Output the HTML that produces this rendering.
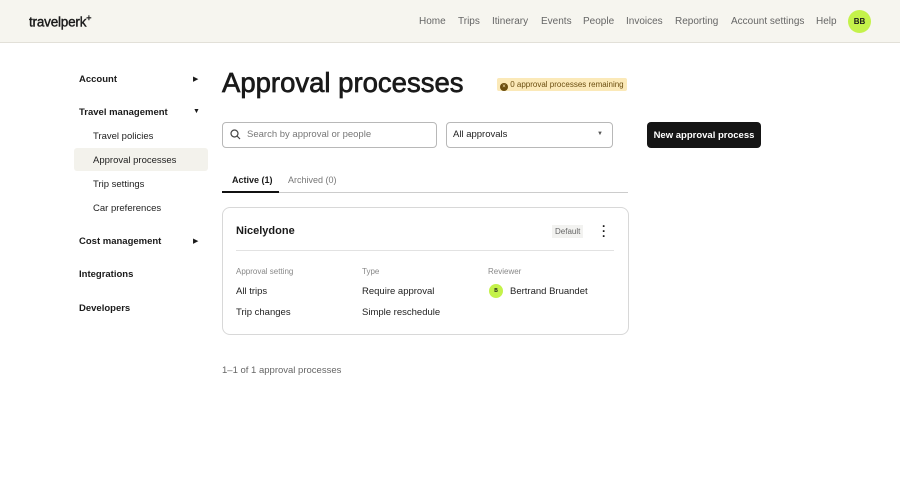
<!DOCTYPE html>
<html><head><style>
*{box-sizing:border-box;margin:0;padding:0}
body{width:900px;height:484px;background:#fff;font-family:"Liberation Sans",sans-serif;color:#1a1a1a;position:relative;overflow:hidden}
.a{position:absolute;white-space:nowrap}
.hdr{position:absolute;left:0;top:0;width:900px;height:43px;background:#f6f5ef;border-bottom:1px solid #e2e0d8}
.nav{font-size:10px;color:#666;top:16px}
.side{font-size:9.5px;font-weight:bold;color:#1a1a1a}
.sub{font-size:9.5px;color:#222}
.tri{font-size:7px}
.lbl{font-size:8px;color:#888}
.val{font-size:9.5px;color:#222}
</style></head><body>
<div class="hdr"></div>
<div class="a" style="left:29px;top:13px;font-size:13.5px;letter-spacing:-0.2px;-webkit-text-stroke:0.4px #1a1a1a">travelperk<sup style="font-size:9px">+</sup></div>
<div class="a nav" style="left:419px">Home</div>
<div class="a nav" style="left:458px">Trips</div>
<div class="a nav" style="left:492px">Itinerary</div>
<div class="a nav" style="left:541px">Events</div>
<div class="a nav" style="left:583px">People</div>
<div class="a nav" style="left:626px">Invoices</div>
<div class="a nav" style="left:675px">Reporting</div>
<div class="a nav" style="left:731px">Account settings</div>
<div class="a nav" style="left:816px">Help</div>
<div class="a" style="left:848px;top:10px;width:23px;height:23px;border-radius:50%;background:#c4f24a;font-size:8px;font-weight:bold;text-align:center;line-height:23px">BB</div>

<div class="a side" style="left:79px;top:74px">Account</div><div class="a tri" style="left:193px;top:75px">▶</div>
<div class="a side" style="left:79px;top:107px">Travel management</div><div class="a tri" style="left:193px;top:108px">▼</div>
<div class="a sub" style="left:93px;top:131px">Travel policies</div>
<div class="a" style="left:74px;top:148px;width:134px;height:23px;background:#f3f2ec;border-radius:3px"></div>
<div class="a sub" style="left:93px;top:155px">Approval processes</div>
<div class="a sub" style="left:93px;top:179px">Trip settings</div>
<div class="a sub" style="left:93px;top:203px">Car preferences</div>
<div class="a side" style="left:79px;top:236px">Cost management</div><div class="a tri" style="left:193px;top:237px">▶</div>
<div class="a side" style="left:79px;top:269px">Integrations</div>
<div class="a side" style="left:79px;top:303px">Developers</div>

<div class="a" style="left:222px;top:67px;font-size:27.5px;-webkit-text-stroke:0.7px #1a1a1a">Approval processes</div>
<div class="a" style="left:497px;top:78px;height:13px;padding:0 3px;background:#fbe9b8;border-radius:2px;font-size:8px;color:#6b4e10;line-height:13px"><span style="display:inline-block;width:8px;height:8px;border-radius:50%;background:#6b4e10;color:#fbe9b8;font-size:6px;line-height:8px;text-align:center;vertical-align:-1px">×</span> 0 approval processes remaining</div>

<div class="a" style="left:222px;top:122px;width:215px;height:26px;border:1px solid #b8b8b8;border-radius:4px"></div>
<svg class="a" style="left:230px;top:129px" width="11" height="11" viewBox="0 0 11 11"><circle cx="4.5" cy="4.5" r="3.5" fill="none" stroke="#444" stroke-width="1.2"/><path d="M7 7l3 3" stroke="#444" stroke-width="1.2"/></svg>
<div class="a" style="left:247px;top:129px;font-size:9.5px;color:#777">Search by approval or people</div>
<div class="a" style="left:446px;top:122px;width:167px;height:26px;border:1px solid #b8b8b8;border-radius:4px"></div>
<div class="a" style="left:453px;top:129px;font-size:9.5px;color:#222">All approvals</div>
<div class="a tri" style="left:597px;top:131px;font-size:6px;color:#555">▼</div>
<div class="a" style="left:647px;top:122px;width:114px;height:26px;background:#151515;border-radius:4px;color:#fff;font-size:9.5px;font-weight:bold;text-align:center;padding-top:8px">New approval process</div>

<div class="a" style="left:222px;top:192px;width:406px;height:1px;background:#ccc"></div>
<div class="a" style="left:222px;top:191px;width:57px;height:2px;background:#111"></div>
<div class="a" style="left:232px;top:175px;font-size:9px;font-weight:bold">Active (1)</div>
<div class="a" style="left:288px;top:175px;font-size:9px;color:#777">Archived (0)</div>

<div class="a" style="left:222px;top:207px;width:407px;height:128px;border:1px solid #d8d8d8;border-radius:8px"></div>
<div class="a" style="left:236px;top:225px;font-size:11px;font-weight:bold">Nicelydone</div>
<div class="a" style="left:552px;top:225px;height:13px;padding:0 3px;background:#f2f2f0;font-size:8px;color:#666;line-height:13px">Default</div>
<div class="a" style="left:602px;top:224px;font-size:12px;font-weight:bold;line-height:5px">·<br>·<br>·</div>
<div class="a" style="left:236px;top:250px;width:378px;height:1px;background:#e2e2e2"></div>
<div class="a lbl" style="left:236px;top:267px">Approval setting</div>
<div class="a lbl" style="left:362px;top:267px">Type</div>
<div class="a lbl" style="left:488px;top:267px">Reviewer</div>
<div class="a val" style="left:236px;top:286px">All trips</div>
<div class="a val" style="left:362px;top:286px">Require approval</div>
<div class="a" style="left:489px;top:284px;width:14px;height:14px;border-radius:50%;background:#c4f24a;font-size:5px;text-align:center;line-height:14px;font-weight:bold">B</div>
<div class="a val" style="left:510px;top:286px">Bertrand Bruandet</div>
<div class="a val" style="left:236px;top:307px">Trip changes</div>
<div class="a val" style="left:362px;top:307px">Simple reschedule</div>

<div class="a" style="left:222px;top:365px;font-size:9.5px;color:#666">1–1 of 1 approval processes</div>
</body></html>
